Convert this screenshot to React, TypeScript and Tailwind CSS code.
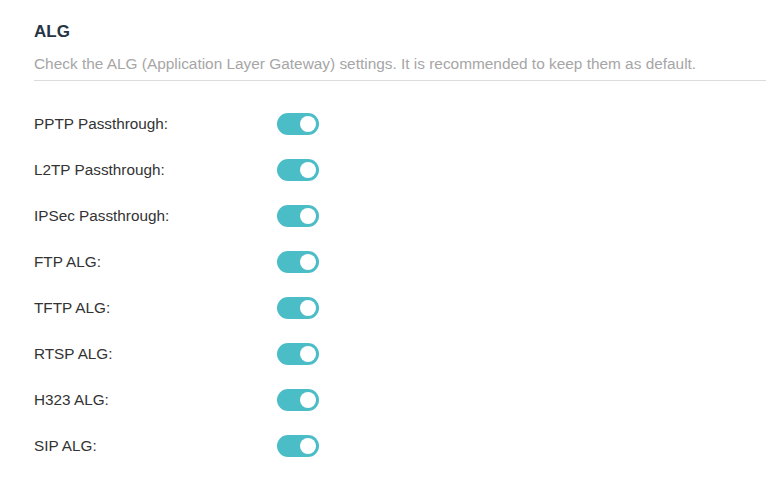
import { useState } from "react";

const ITEMS = [
  "PPTP Passthrough:",
  "L2TP Passthrough:",
  "IPSec Passthrough:",
  "FTP ALG:",
  "TFTP ALG:",
  "RTSP ALG:",
  "H323 ALG:",
  "SIP ALG:",
];

function Toggle({ on, onClick }: { on: boolean; onClick: () => void }) {
  return (
    <button
      type="button"
      onClick={onClick}
      className={`relative w-[42px] h-[22px] rounded-full transition-colors ${
        on ? "bg-[#4bbdc6]" : "bg-[#c8c8c8]"
      }`}
    >
      <span
        className={`absolute top-[3px] w-4 h-4 rounded-full bg-white transition-all ${
          on ? "left-[23px]" : "left-[3px]"
        }`}
      />
    </button>
  );
}

export default function App() {
  const [state, setState] = useState<boolean[]>(ITEMS.map(() => true));

  return (
    <div className="min-h-screen bg-white pl-[34px] pt-[22px] font-['Liberation_Sans',Arial,sans-serif]">
      <h2 className="text-[17px] leading-5 font-bold text-[#273444]">ALG</h2>
      <p className="mt-[12px] text-[15.4px] leading-5 text-[#a6a6a6]">
        Check the ALG (Application Layer Gateway) settings. It is recommended to
        keep them as default.
      </p>
      <div className="mt-[6px] border-t border-[#dcdcdc]" />
      <div className="pt-[32px] flex flex-col gap-[24px]">
        {ITEMS.map((label, i) => (
          <div key={label} className="flex items-center h-[22px]">
            <span className="w-[243px] text-[15.3px] text-[#333333]">{label}</span>
            <Toggle
              on={state[i]}
              onClick={() =>
                setState((s) => s.map((v, j) => (j === i ? !v : v)))
              }
            />
          </div>
        ))}
      </div>
    </div>
  );
}
